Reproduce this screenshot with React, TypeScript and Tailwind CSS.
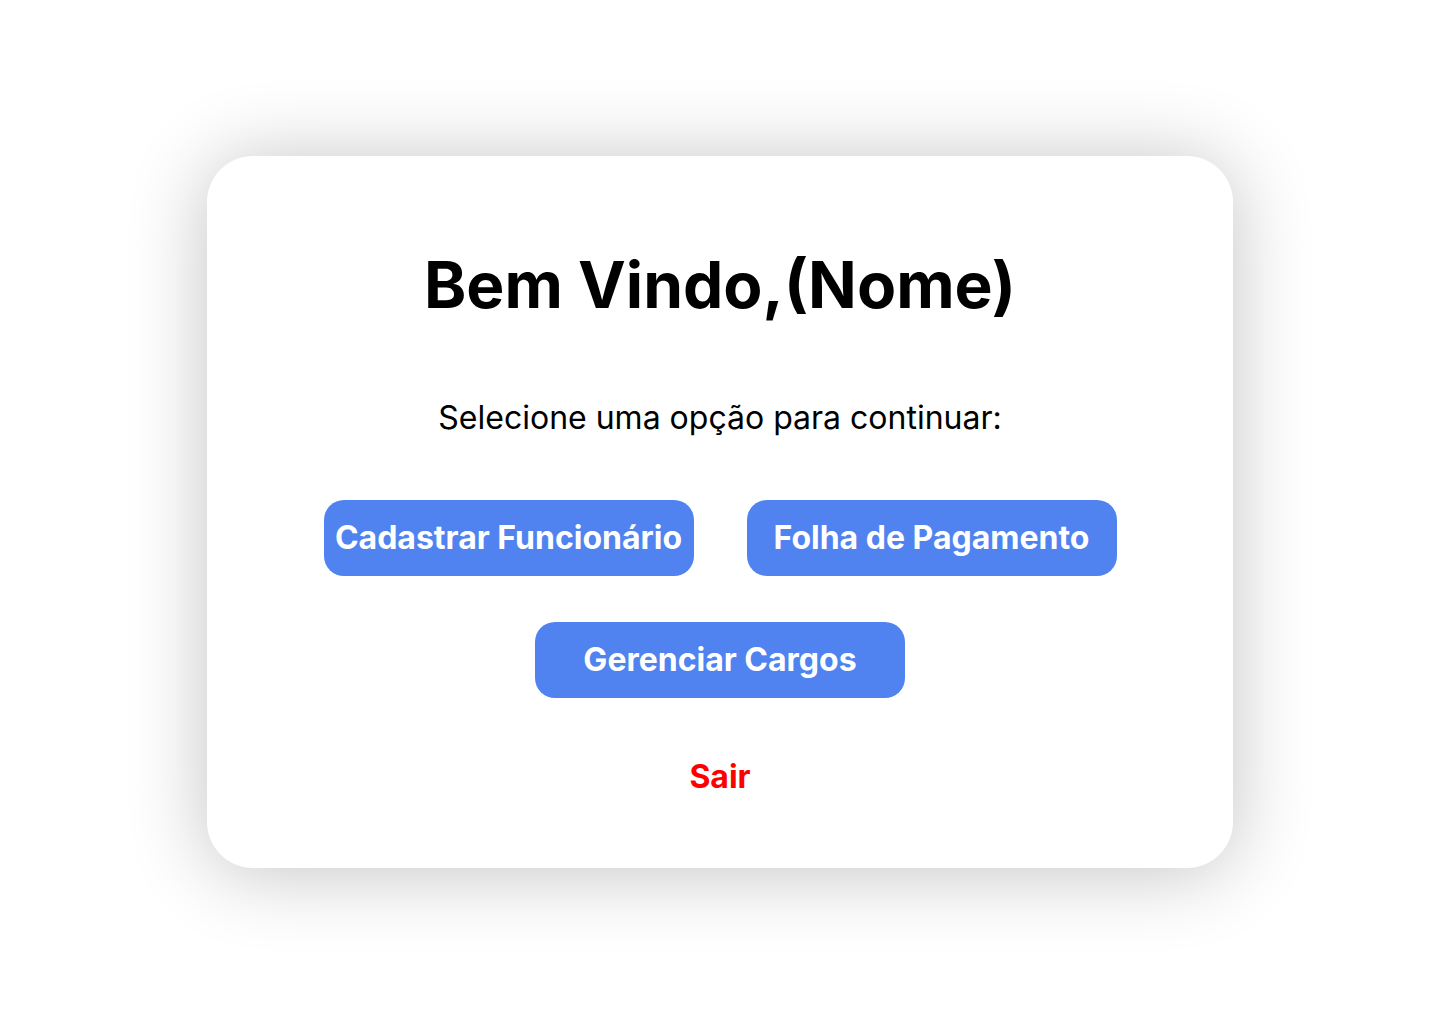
import React from "react";

export default function App() {
  return (
    <div className="w-[1440px] h-[1024px] bg-white flex items-center justify-center" style={{ fontFamily: "Inter, 'Noto Sans', sans-serif" }}>
      <div className="w-[1026px] h-[712px] bg-white rounded-[46px] shadow-[0_4px_80px_rgba(0,0,0,0.24)] flex flex-col items-center pt-[90px]">
        <h1 className="text-[64px] leading-[78px] font-bold text-black">Bem Vindo,(Nome)</h1>
        <p className="mt-[76px] text-[32px] leading-[36px] text-black">Selecione uma opção para continuar:</p>
        <div className="mt-[64px] flex gap-[53px]">
          <button className="w-[370px] h-[76px] rounded-[20px] bg-[#5083EF] text-white text-[32px] font-bold">Cadastrar Funcionário</button>
          <button className="w-[370px] h-[76px] rounded-[20px] bg-[#5083EF] text-white text-[32px] font-bold">Folha de Pagamento</button>
        </div>
        <button className="mt-[46px] w-[370px] h-[76px] rounded-[20px] bg-[#5083EF] text-white text-[32px] font-bold">Gerenciar Cargos</button>
        <button className="mt-[61px] text-[32px] leading-[36px] font-bold text-[#FF0000]">Sair</button>
      </div>
    </div>
  );
}
